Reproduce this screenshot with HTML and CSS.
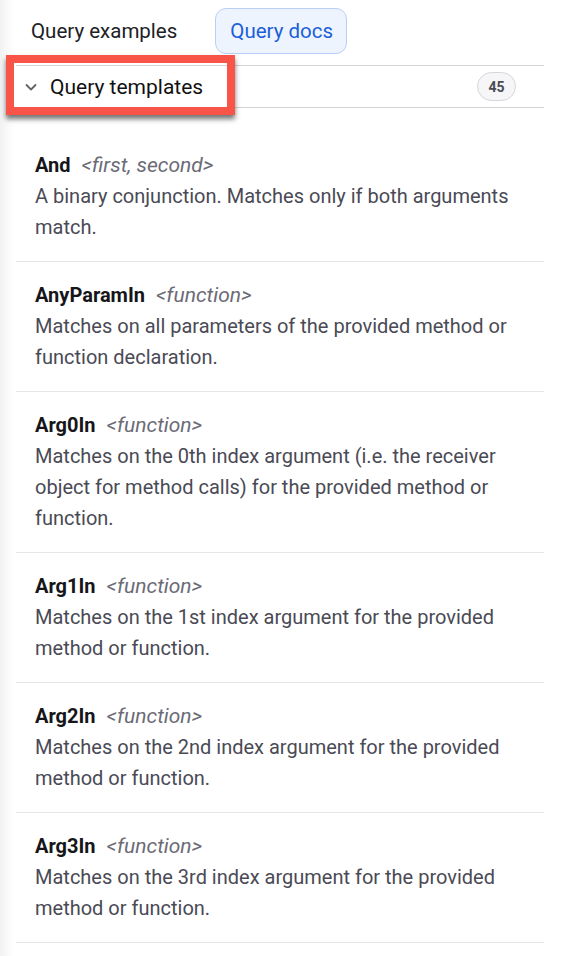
FILE: index.html
```html
<!DOCTYPE html>
<html>
<head>
<meta charset="utf-8">
<link rel="stylesheet" href="styles.css">
</head>
<body>
<div class="page">
  <div class="panel">
    <div class="tabs">
      <div class="tab">Query examples</div>
      <div class="tab tab-active">Query docs</div>
    </div>
    <div class="section-header">
      <svg class="chevron" width="14" height="14" viewBox="0 0 14 14"><path d="M2.5 5 L7 9.5 L11.5 5" fill="none" stroke="#5f6368" stroke-width="1.8" stroke-linecap="round" stroke-linejoin="round"/></svg>
      <span class="section-title">Query templates</span>
      <span class="badge">45</span>
      <div class="highlight"></div>
    </div>
    <div class="list">
      <div class="item">
        <div class="item-head"><span class="name">And</span><span class="args">&lt;first, second&gt;</span></div>
        <div class="desc">A binary conjunction. Matches only if both arguments match.</div>
      </div>
      <div class="item">
        <div class="item-head"><span class="name">AnyParamIn</span><span class="args">&lt;function&gt;</span></div>
        <div class="desc">Matches on all parameters of the provided method or function declaration.</div>
      </div>
      <div class="item">
        <div class="item-head"><span class="name">Arg0In</span><span class="args">&lt;function&gt;</span></div>
        <div class="desc">Matches on the 0th index argument (i.e. the receiver object for method calls) for the provided method or function.</div>
      </div>
      <div class="item">
        <div class="item-head"><span class="name">Arg1In</span><span class="args">&lt;function&gt;</span></div>
        <div class="desc">Matches on the 1st index argument for the provided method or function.</div>
      </div>
      <div class="item">
        <div class="item-head"><span class="name">Arg2In</span><span class="args">&lt;function&gt;</span></div>
        <div class="desc">Matches on the 2nd index argument for the provided method or function.</div>
      </div>
      <div class="item">
        <div class="item-head"><span class="name">Arg3In</span><span class="args">&lt;function&gt;</span></div>
        <div class="desc">Matches on the 3rd index argument for the provided method or function.</div>
      </div>
    </div>
  </div>
</div>
</body>
</html>
```

FILE: styles.css
```css
* { box-sizing: border-box; }
html, body {
  margin: 0;
  padding: 0;
  background: #ffffff;
  height: 956px;
  overflow: hidden;
}
body {
  font-family: Roboto, "Liberation Sans", sans-serif;
  color: #202124;
}
.page {
  background: linear-gradient(to right, #f2f2f3 0px, #fafafa 8px, #ffffff 14px);
  min-height: 956px;
  padding: 8px 26px 0 16px;
}
.panel {
  width: 528px;
}
.tabs {
  display: flex;
  align-items: center;
  gap: 24px;
  height: 46px;
}
.tab {
  height: 46px;
  display: flex;
  align-items: center;
  padding: 0 13px 0 14px;
  font-size: 20.5px;
  color: #202124;
  border: 1px solid transparent;
  border-radius: 11px;
}
.tab-active {
  background: #eef4fe;
  border-color: #b9d0f6;
  color: #1b5fd9;
}
.section-header {
  position: relative;
  margin-top: 11px;
  height: 43px;
  border-top: 1px solid #d3d3d6;
  border-bottom: 1px solid #d3d3d6;
  display: flex;
  align-items: center;
  padding: 0 28px 0 8px;
}
.chevron {
  flex: none;
}
.section-title {
  margin-left: 12px;
  font-size: 21px;
  color: #111111;
  flex: 1;
}
.badge {
  height: 29px;
  min-width: 39px;
  padding: 0 10px;
  border-radius: 15px;
  border: 1px solid #d6d6da;
  background: #f6f6f8;
  font-size: 14px;
  font-weight: 700;
  color: #4b4b55;
  display: flex;
  align-items: center;
  justify-content: center;
}
.highlight {
  position: absolute;
  left: -10px;
  top: -11px;
  width: 229px;
  height: 60px;
  border: 8px solid #f85448;
  box-shadow: 0 4px 5px rgba(0, 0, 0, 0.55);
  pointer-events: none;
}
.list {
  margin-top: 24px;
}
.item {
  padding: 18px 19px 18px 19px;
  border-bottom: 1px solid #e6e6e8;
  line-height: 31px;
}
.item-head {
  display: flex;
  align-items: baseline;
  gap: 11px;
}
.name {
  font-size: 20px;
  font-weight: 700;
  color: #16161a;
}
.args {
  font-size: 21px;
  font-style: italic;
  color: #6b6b76;
}
.desc {
  font-size: 20px;
  color: #4a4a55;
}
```
